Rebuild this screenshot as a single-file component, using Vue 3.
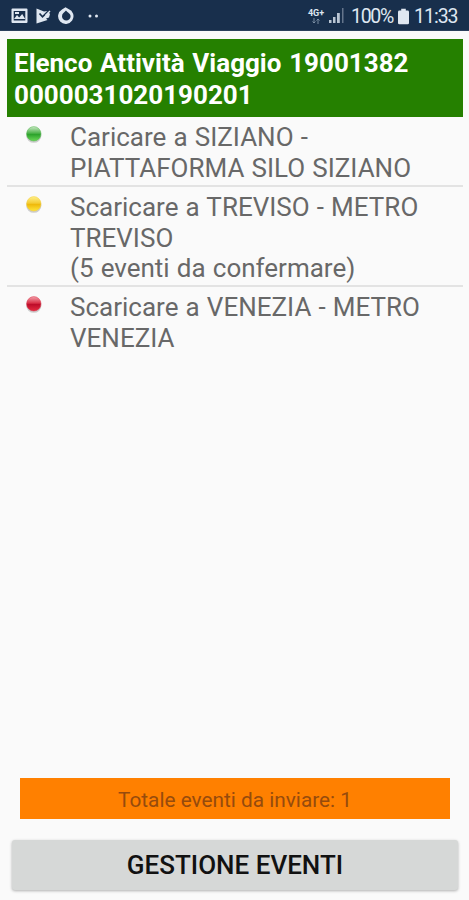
<script setup>
const activities = [
  { status: 'green', lines: ['Caricare a SIZIANO -', 'PIATTAFORMA SILO SIZIANO'] },
  { status: 'yellow', lines: ['Scaricare a TREVISO - METRO', 'TREVISO', '(5 eventi da confermare)'] },
  { status: 'red', lines: ['Scaricare a VENEZIA - METRO', 'VENEZIA'] },
]
const colors = {
  green: ['#c9e8c5', '#50b44c', '#2da32c', '#6bd957'],
  yellow: ['#fff08a', '#f4cc35', '#efb90c', '#ffe63a'],
  red: ['#f3a0aa', '#d93248', '#bd0d2a', '#e52b40'],
}
</script>

<template>
  <div class="screen">
    <header class="status">
      <svg class="notifications" width="92" height="20" viewBox="0 0 92 20">
        <path fill="#dfe7f1" fill-rule="evenodd" d="M1.500 2.500h14a1 1 0 0 1 1 1v12.500a1 1 0 0 1-1 1h-14a1 1 0 0 1-1-1V3.500a1 1 0 0 1 1-1zM2.700 5v9.500h11.600V5z" />
        <path fill="#dfe7f1" d="M3 13l3-4 2.200 2.500 3-3.500 3 5zM4 6h4v2H4z" />
        <path fill="#dfe7f1" d="M25.500 2.500L33 5.500 36.500 5 39 8l-1 3.500-3 1 1.500 1.500-11 3.500z" />
        <path fill="none" stroke="#182f4c" stroke-width="1.700" d="M28.500 7.500l3 3.300 5.500-5.500" />
        <path fill="none" stroke="#dfe7f1" stroke-width="1.500" d="M34.500 9.500L39 5" />
        <path fill="#dfe7f1" fill-rule="evenodd" d="M54.500 1.300l3 1.700a7.700 7.700 0 1 1-6.500.5zM55 4.600c-1.500 1.700-4 3-4 5.600a4.300 4.300 0 0 0 8.600 0c0-2.600-3-3.400-4.600-5.600z" />
        <circle cx="79" cy="10" r="1.500" fill="#dfe7f1" /><circle cx="85.500" cy="10" r="1.500" fill="#dfe7f1" />
      </svg>
      <div class="system">
        <div class="network">
          <span>4G+</span>
          <svg width="10" height="6" viewBox="0 0 10 6"><path d="M3 0v5M1.500 3.500L3 5l1.500-1.500M7 6V1M5.500 2.500L7 1l1.500 1.500" fill="none" stroke="#8295aa" stroke-width=".9" /></svg>
        </div>
        <svg class="signal" width="16" height="16" viewBox="0 0 16 16">
          <path fill="#b9c5d3" d="M0 12h2.500v3H0zM4 9h2.500v6H4zM8 5h2.800v10H8z" /><path fill="#64758b" d="M13 0h1.500v15H13z" />
        </svg>
        <span class="percent">100%</span>
        <svg class="battery" width="11" height="17" viewBox="0 0 12 17"><path fill="#dfe7f1" d="M3.500 0h5v2h2q1.500 0 1.500 1.500v12q0 1.500-1.500 1.500h-9Q0 17 0 15.500v-12Q0 2 1.500 2h2z" /></svg>
        <span class="clock">11:33</span>
      </div>
    </header>
    <main class="content">
      <h1 class="title"><span>Elenco Attività Viaggio 19001382</span><span>0000031020190201</span></h1>
      <ul class="list">
        <li v-for="item in activities" :key="item.status" class="row">
          <svg class="ball" width="18" height="20" viewBox="0 0 18 20">
            <defs>
              <linearGradient :id="item.status" x1="0" y1="0" x2="0" y2="1">
                <stop offset="0" :stop-color="colors[item.status][0]" />
                <stop offset=".45" :stop-color="colors[item.status][1]" />
                <stop offset=".55" :stop-color="colors[item.status][2]" />
                <stop offset="1" :stop-color="colors[item.status][3]" />
              </linearGradient>
            </defs>
            <ellipse cx="8.800" cy="10.400" rx="7.600" ry="7.400" fill="#777" opacity=".35" />
            <circle cx="8.800" cy="8.800" r="7.200" :fill="`url(#${item.status})`" :stroke="colors[item.status][1]" stroke-width=".5" />
          </svg>
          <p class="text"><span v-for="line in item.lines" :key="line">{{ line }}</span></p>
        </li>
      </ul>
    </main>
    <footer class="footer">
      <div class="total">Totale eventi da inviare: 1</div>
      <button class="action" type="button">GESTIONE EVENTI</button>
    </footer>
  </div>
</template>

<style>
body { margin: 0; background: #fafafa; }
</style>

<style scoped>
.screen { display: flex; flex-direction: column; height: 900px; box-sizing: border-box; background: #fafafa; font-family: Roboto, sans-serif; overflow: hidden; }
.status { height: 31px; flex: none; box-sizing: border-box; display: flex; align-items: center; justify-content: space-between; padding: 2px 11px 0 11px; background: #182f4c; border-bottom: 1px solid #2b405c; color: #dfe7f1; }
.system { display: flex; align-items: center; }
.network { display: flex; flex-direction: column; align-items: center; width: 18px; font-size: 9px; line-height: 9px; font-weight: 700; margin-right: 4px; }
.signal { margin-right: 6px; }
.percent { font-size: 19.500px; width: 42px; white-space: nowrap; letter-spacing: -1.300px; }
.battery { margin: 0 5px 0 5px; }
.clock { font-size: 19.500px; width: 44px; white-space: nowrap; letter-spacing: -1px; }
.content { padding: 8px 6px 0 7px; flex: 1; }
.title { margin: 0; height: 78px; box-sizing: border-box; padding: 9px 7px 0; background: #258000; color: #fff; font-size: 26px; line-height: 31px; font-weight: 700; word-spacing: 1.300px; }
.title span, .text span { display: block; white-space: nowrap; }
.title span { padding-top: .400px; }
.list { list-style: none; margin: 0; padding: 0; }
.row { display: flex; padding: 5.300px 0 1.900px 18px; border-bottom: 2px solid #e3e3e3; }
.row:last-child { border-bottom: 0; padding-top: 5px; }
.ball { flex: none; margin: 2.700px 27px 0 0; }
.text { margin: 0; color: #686868; font-size: 26px; line-height: 30.400px; word-spacing: .700px; }
.footer { flex: none; padding: 0 11px 10px 12px; }
.total { height: 41px; margin: 0 8px 21px; box-sizing: border-box; padding-top: 1px; background: #ff8000; color: #964b0d; font-size: 20.800px; line-height: 42px; text-align: center; }
.action { display: block; width: 100%; height: 50px; padding: 0; border: 0; border-radius: 3px; background: #d6d8d7; box-shadow: 0 1px 3px rgba(0,0,0,.3); color: #111; font-family: inherit; font-size: 26px; font-weight: 500; line-height: 50px; }
</style>
